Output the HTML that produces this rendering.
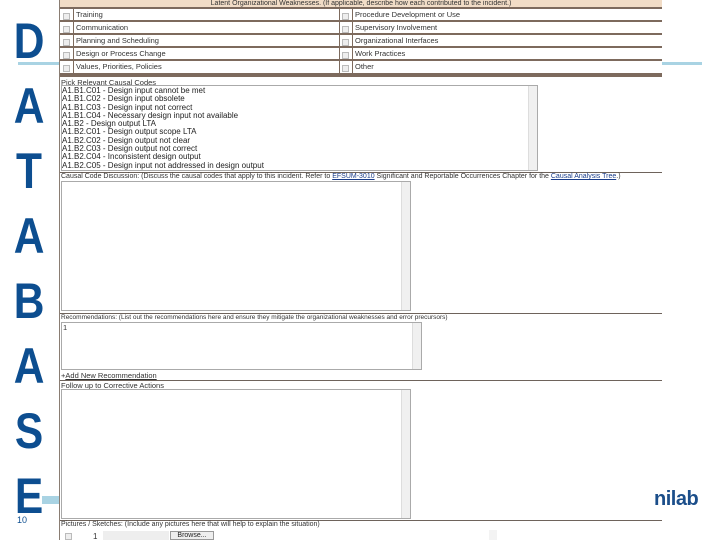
<!DOCTYPE html>
<html><head><style>
*{margin:0;padding:0;box-sizing:border-box}
body{width:720px;height:540px;background:#fff;position:relative;overflow:hidden;font-family:"Liberation Sans",Arial,sans-serif;color:#222}
.L{position:absolute;left:11px;width:36px;text-align:center;font-weight:bold;font-size:50px;line-height:50px;color:#0d4e90;transform:scaleX(0.85)}
.a{position:absolute}
.t{position:absolute;font-size:7.5px;white-space:nowrap;color:#333}
.row{position:absolute;left:60px;width:602px;height:13px;background:#fff;border-bottom:2px solid #7d6a5d}
.cb{position:absolute;top:3px;width:7px;height:7px;border:1px solid #bbb;background:#eee}
.ta{position:absolute;border:1px solid #aaa;background:#fff}
.sb{position:absolute;top:0;right:0;width:9px;height:100%;background:#f0f0f0;border-left:1px solid #ddd}
.hl{position:absolute;left:60px;width:602px;height:1px;background:#6e635b}
</style></head><body>
<div class="a" style="left:18px;top:62px;width:42px;height:3px;background:#a9d3e3"></div>
<div class="a" style="left:662px;top:62px;width:40px;height:3px;background:#a9d3e3"></div>
<div class="a" style="left:42px;top:496px;width:18px;height:8px;background:#a9d3e3"></div>
<div class="L" style="top:16px">D</div>
<div class="L" style="top:81px">A</div>
<div class="L" style="top:146px">T</div>
<div class="L" style="top:211px">A</div>
<div class="L" style="top:276px">B</div>
<div class="L" style="top:341px">A</div>
<div class="L" style="top:406px">S</div>
<div class="L" style="top:471px">E</div>
<div class="t" style="left:17px;top:515px;font-size:9px;color:#0d4e90">10</div>
<div class="a" style="left:654px;top:488px;font-size:20px;font-weight:bold;color:#1b4e8a;letter-spacing:-0.5px">nilab</div>

<div class="a" style="left:59px;top:0;width:1px;height:540px;background:#8a7d73"></div>
<div class="a" style="left:60px;top:0;width:602px;height:9px;background:#f1dcc6;border-bottom:2px solid #7d6a5d"></div>
<div class="t" style="left:60px;width:602px;text-align:center;top:0px;font-size:7px">Latent Organizational Weaknesses. (If applicable, describe how each contributed to the incident.)</div>
<div class="row" style="top:9px"></div><div class="row" style="top:22px"></div><div class="row" style="top:35px"></div><div class="row" style="top:48px"></div><div class="row" style="top:61px;border-bottom:4px solid #7d6a5d;height:16px"></div>
<div class="a" style="left:73px;top:9px;width:1px;height:65px;background:#7d6a5d"></div>
<div class="a" style="left:339px;top:9px;width:1px;height:65px;background:#7d6a5d"></div>
<div class="a" style="left:352px;top:9px;width:1px;height:65px;background:#7d6a5d"></div>
<div class="cb" style="left:63px;top:13px"></div><div class="cb" style="left:63px;top:26px"></div><div class="cb" style="left:63px;top:39px"></div><div class="cb" style="left:63px;top:52px"></div><div class="cb" style="left:63px;top:65px"></div>
<div class="cb" style="left:342px;top:13px"></div><div class="cb" style="left:342px;top:26px"></div><div class="cb" style="left:342px;top:39px"></div><div class="cb" style="left:342px;top:52px"></div><div class="cb" style="left:342px;top:65px"></div>
<div class="t" style="left:76px;top:10px">Training</div><div class="t" style="left:355px;top:10px">Procedure Development or Use</div>
<div class="t" style="left:76px;top:23px">Communication</div><div class="t" style="left:355px;top:23px">Supervisory Involvement</div>
<div class="t" style="left:76px;top:36px">Planning and Scheduling</div><div class="t" style="left:355px;top:36px">Organizational Interfaces</div>
<div class="t" style="left:76px;top:49px">Design or Process Change</div><div class="t" style="left:355px;top:49px">Work Practices</div>
<div class="t" style="left:76px;top:62px">Values, Priorities, Policies</div><div class="t" style="left:355px;top:62px">Other</div>

<div class="t" style="left:61px;top:78px">Pick Relevant Causal Codes</div>
<div class="ta" style="left:61px;top:85px;width:477px;height:86px"><div class="sb"></div></div>
<div class="t" style="left:62px;top:87px;font-size:8px;line-height:8.3px;color:#222">A1.B1.C01 - Design input cannot be met<br>A1.B1.C02 - Design input obsolete<br>A1.B1.C03 - Design input not correct<br>A1.B1.C04 - Necessary design input not available<br>A1.B2 - Design output LTA<br>A1.B2.C01 - Design output scope LTA<br>A1.B2.C02 - Design output not clear<br>A1.B2.C03 - Design output not correct<br>A1.B2.C04 - Inconsistent design output<br>A1.B2.C05 - Design input not addressed in design output</div>
<div class="hl" style="top:172px"></div>
<div class="t" style="left:61px;top:173px;font-size:7px">Causal Code Discussion: (Discuss the causal codes that apply to this incident. Refer to <u style="color:#1a3d8a">EFSUM-3010</u> Significant and Reportable Occurrences Chapter for the <u style="color:#1a3d8a">Causal Analysis Tree</u>.)</div>
<div class="ta" style="left:61px;top:181px;width:350px;height:130px"><div class="sb"></div></div>
<div class="hl" style="top:313px"></div>
<div class="t" style="left:61px;top:314px;font-size:6.5px">Recommendations: (List out the recommendations here and ensure they mitigate the organizational weaknesses and error precursors)</div>
<div class="ta" style="left:61px;top:322px;width:361px;height:48px"><div class="sb"></div></div>
<div class="t" style="left:63px;top:323px">1</div>
<div class="t" style="left:61px;top:371px">+<u>Add New Recommendation</u></div>
<div class="hl" style="top:380px"></div>
<div class="t" style="left:61px;top:381px">Follow up to Corrective Actions</div>
<div class="ta" style="left:61px;top:389px;width:350px;height:130px"><div class="sb"></div></div>
<div class="hl" style="top:520px"></div>
<div class="t" style="left:61px;top:521px;font-size:7px">Pictures / Sketches: (Include any pictures here that will help to explain the situation)</div>
<div class="cb" style="left:65px;top:533px"></div>
<div class="t" style="left:93px;top:532px;font-size:8px">1</div>
<div class="a" style="left:103px;top:531px;width:66px;height:9px;background:#eee"></div>
<div class="a" style="left:170px;top:531px;width:44px;height:9px;border:1px solid #999;background:#eee;font-size:7px;text-align:center;line-height:8px">Browse...</div>
<div class="a" style="left:489px;top:530px;width:8px;height:10px;background:#f3f3f3"></div>
</body></html>
